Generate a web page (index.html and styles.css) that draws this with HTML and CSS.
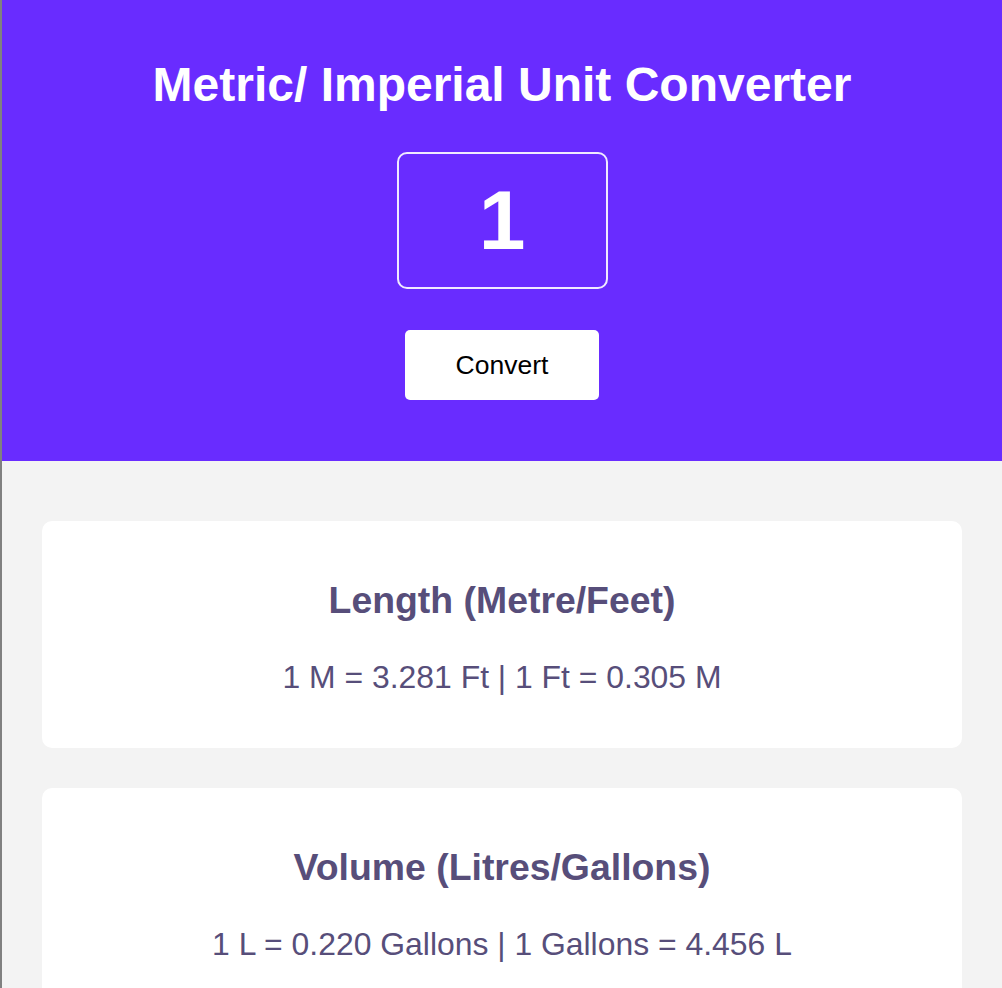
FILE: index.html
```html
<!DOCTYPE html>
<html lang="en">
<head>
<meta charset="utf-8">
<title>Metric/ Imperial Unit Converter</title>
<link rel="stylesheet" href="styles.css">
</head>
<body>
  <header class="hero">
    <h1 class="hero-title">Metric/ Imperial Unit Converter</h1>
    <input class="value-input" type="text" value="1">
    <button class="convert-btn" type="button">Convert</button>
  </header>
  <main class="results">
    <section class="card">
      <h2 class="card-title">Length (Metre/Feet)</h2>
      <p class="card-text">1 M = 3.281 Ft | 1 Ft = 0.305 M</p>
    </section>
    <section class="card">
      <h2 class="card-title">Volume (Litres/Gallons)</h2>
      <p class="card-text">1 L = 0.220 Gallons | 1 Gallons = 4.456 L</p>
    </section>
    <section class="card">
      <h2 class="card-title">Mass (Kilograms/Pounds)</h2>
      <p class="card-text">1 Kg = 2.204 Pounds | 1 Pounds = 0.454 Kg</p>
    </section>
  </main>
</body>
</html>
```
FILE: styles.css
```css
* { box-sizing: border-box; }

html, body {
  margin: 0;
  padding: 0;
}

body {
  font-family: "Liberation Sans", Arial, sans-serif;
  background: #f3f3f3;
  border-left: 2px solid #808080;
  min-height: 100vh;
}

.hero {
  background: #692cff;
  display: flex;
  flex-direction: column;
  align-items: center;
  padding: 57px 20px 61px;
}

.hero-title {
  margin: 0;
  color: #ffffff;
  font-size: 48px;
  line-height: 55px;
  font-weight: 700;
  text-align: center;
}

.value-input {
  margin-top: 40px;
  width: 211px;
  height: 137px;
  border: 2px solid rgba(255, 255, 255, 0.9);
  border-radius: 10px;
  background: transparent;
  color: #ffffff;
  font-family: "Liberation Sans", Arial, sans-serif;
  font-size: 84px;
  font-weight: 700;
  text-align: center;
  padding: 0;
  outline: none;
}

.convert-btn {
  margin-top: 41px;
  width: 194px;
  height: 70px;
  border: none;
  border-radius: 5px;
  background: #ffffff;
  color: #000000;
  font-family: "Liberation Sans", Arial, sans-serif;
  font-size: 26.5px;
  cursor: pointer;
}

.results {
  display: flex;
  flex-direction: column;
  gap: 40px;
  padding: 60px 40px;
}

.card {
  background: #ffffff;
  border-radius: 10px;
  padding: 58px 20px 52px;
  text-align: center;
  color: #574e7a;
}

.card-title {
  margin: 0 0 38px;
  font-size: 37.4px;
  line-height: 42px;
  font-weight: 700;
}

.card-text {
  margin: 0;
  font-size: 31.9px;
  line-height: 37px;
}
```
